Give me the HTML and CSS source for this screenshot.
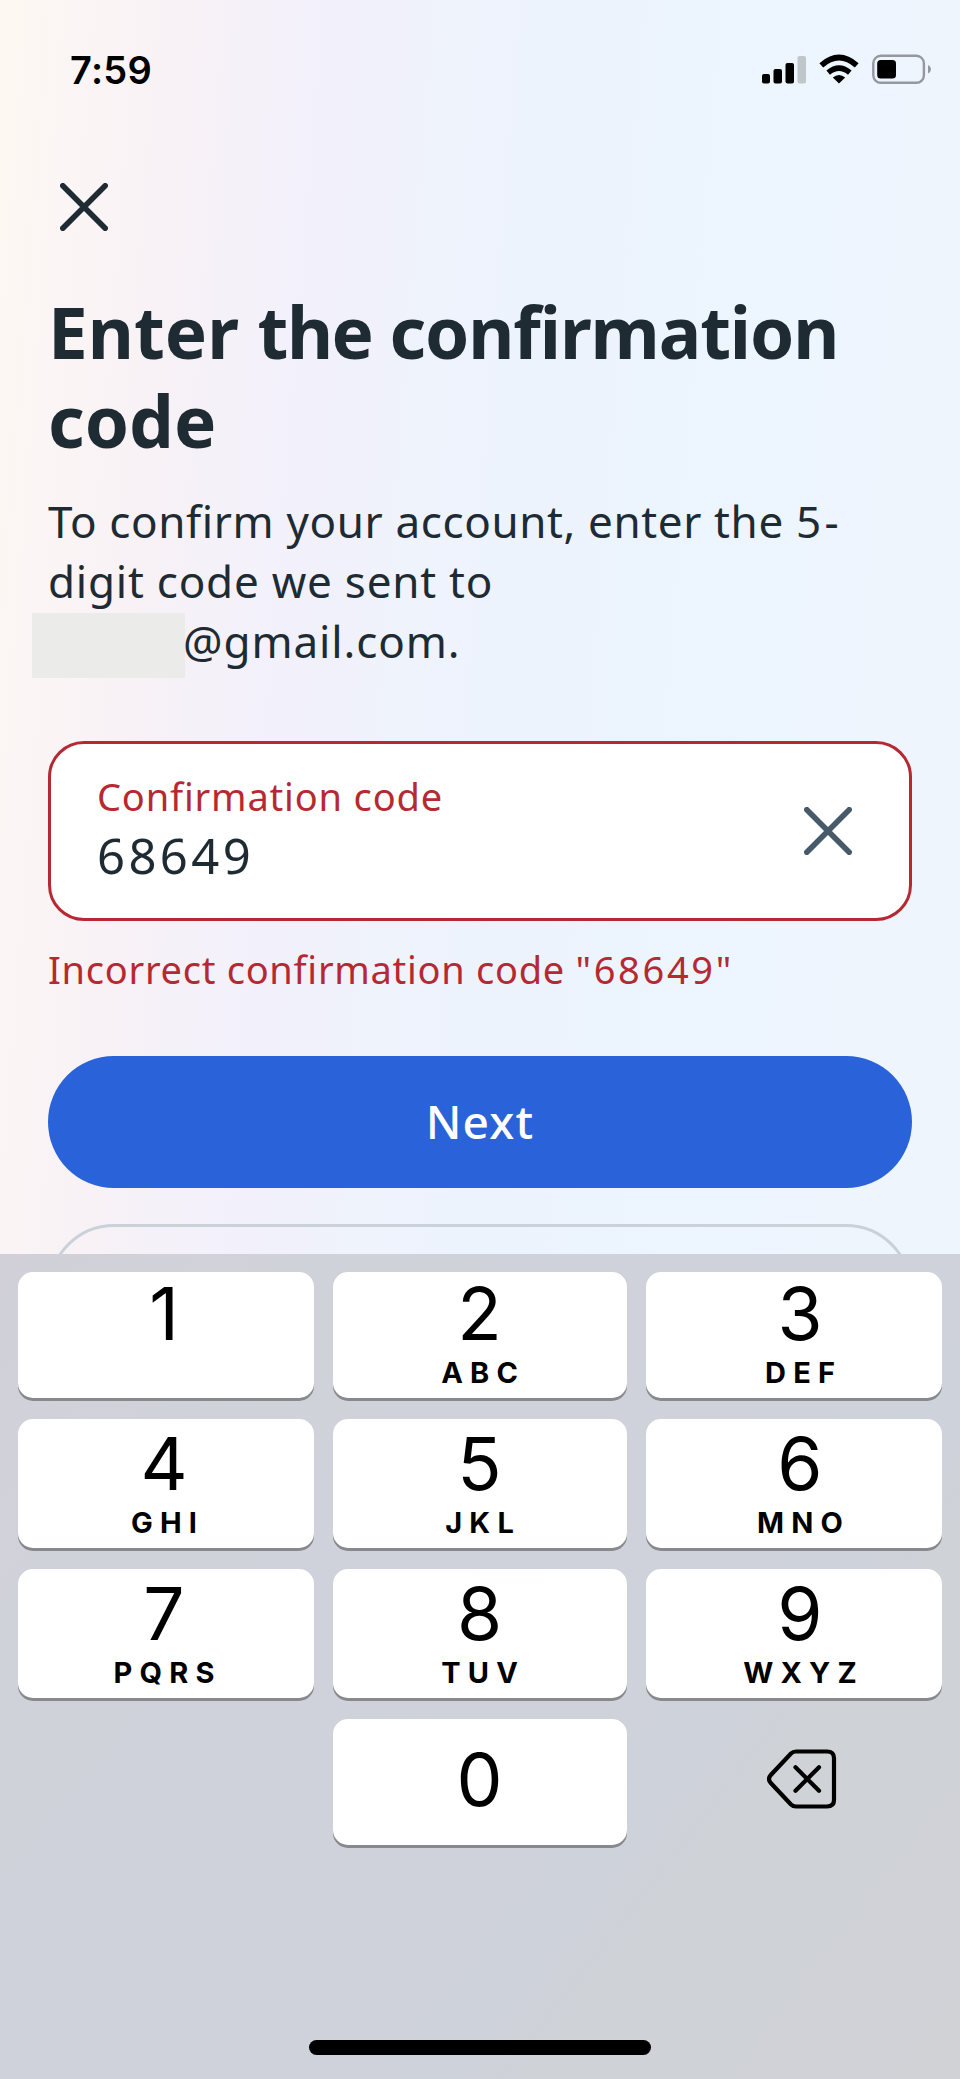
FILE: index.html
```html
<!DOCTYPE html>
<html lang="en">
<head>
<meta charset="utf-8">
<title>Enter the confirmation code</title>
<link rel="stylesheet" href="styles.css">
</head>
<body>
<div class="screen">
  <header class="status">
    <span class="time">7:59</span>
    <svg class="status-icons" width="170" height="30" viewBox="0 0 170 30">
      <rect x="0" y="20" width="8" height="9.5" rx="2"/>
      <rect x="11.5" y="15" width="8.500" height="14.500" rx="2"/>
      <rect x="23.500" y="9" width="8.500" height="20.500" rx="2"/>
      <rect x="35.500" y="2" width="8.500" height="27.500" rx="2" fill="#c1c6ca"/>
      <path d="M77 29.500 L70.800 23.400 Q77 18.400 83.200 23.400Z"/>
      <path d="M66.200 18.700 Q77 9.700 87.800 18.700" fill="none" stroke="#000" stroke-width="5.600"/>
      <path d="M59.300 11.400 Q77 -4.200 94.700 11.400" fill="none" stroke="#000" stroke-width="5.800"/>
      <rect x="111.300" y="1.800" width="50.600" height="27" rx="7.500" fill="none" stroke="#95989e" stroke-width="2.400"/>
      <rect x="115.200" y="6" width="18.800" height="18.600" rx="3.500"/>
      <path d="M166 11 Q169 12.500 169 15.200 Q169 18 166 19.500Z" fill="#95989e"/>
    </svg>
  </header>
  <main class="content">
    <svg class="close" width="48" height="48" viewBox="0 0 48 48"><path d="M2.800 2.800 45.200 45.200M45.200 2.800 2.800 45.200"/></svg>
    <h1 class="title"><span class="wide">Enter </span><span class="tight">the </span><span class="snug">confirmation</span><br>code</h1>
    <p class="intro"><span class="intro-first">To confirm your account, enter the <span class="five">5-</span></span><br>digit code we sent to</p>
    <div class="email"><span class="mask"></span><span class="domain">@gmail.com.</span></div>
    <div class="field">
      <div class="field-text">
        <div class="label">Confirmation code</div>
        <div class="value">68649</div>
      </div>
      <svg class="clear" width="48" height="48" viewBox="0 0 48 48"><path d="M2.800 2.800 45.200 45.200M45.200 2.800 2.800 45.200"/></svg>
    </div>
    <div class="error">Incorrect confirmation code <span class="quoted">"68649"</span></div>
    <div class="next"><span>Next</span></div>
    <div class="secondary"></div>
  </main>
  <section class="keyboard">
    <div class="keys">
      <div class="key left"><b>1</b></div>
      <div class="key"><b>2</b><i>ABC</i></div>
      <div class="key right"><b>3</b><i>DEF</i></div>
      <div class="key tall left"><b>4</b><i>GHI</i></div>
      <div class="key tall"><b>5</b><i>JKL</i></div>
      <div class="key tall right"><b>6</b><i>MNO</i></div>
      <div class="key tall left"><b>7</b><i>PQRS</i></div>
      <div class="key tall"><b>8</b><i>TUV</i></div>
      <div class="key tall right"><b>9</b><i>WXYZ</i></div>
      <div></div>
      <div class="key zero"><b>0</b></div>
      <div class="delete">
        <svg width="70" height="60" viewBox="0 0 70 60"><path d="M29 2.500H60Q67 2.500 67 9V51Q67 57.500 60 57.500H29Q26 57.500 24 55.500L3.800 34Q0.200 30 3.800 26L24 4.500Q26 2.500 29 2.500Z"/><path d="M28.500 18.200 52 41.800M52 18.200 28.500 41.800"/></svg>
      </div>
    </div>
    <div class="home"></div>
  </section>
</div>
</body>
</html>
```
FILE: styles.css
```css
* { box-sizing: border-box; }
body { margin: 0; }
.screen {
  width: 960px;
  height: 2079px;
  display: flex;
  flex-direction: column;
  overflow: hidden;
  color: #1e2b33;
  font-family: "Noto Sans", sans-serif;
  background: linear-gradient(94.500deg, #fef8f3 0, #fdf7f3 40px, #fbf5f5 75px, #f8f2f6 180px, #f5f1f8 245px, #f3f1fb 310px, #f1f1fb 390px, #eff3fc 440px, #edf3fd 560px, #ecf4fd 680px, #edf5fe 800px, #eef5fd 960px);
}
.status {
  display: flex;
  justify-content: space-between;
  height: 183px;
  padding: 54px 28px 0 70px;
  color: #000;
  font-family: Inter, sans-serif;
}
.time { font-size: 38px; line-height: 33px; font-weight: 600; height: 33px; letter-spacing: 0.300px; }
.content {
  height: 1071px;
  padding: 0 48px;
  display: flex;
  flex-direction: column;
  overflow: hidden;
}
.close { flex: none; margin-left: 12px; fill: none; stroke: #1e2b33; stroke-width: 5.600px; stroke-linecap: round; }
.title { margin: 56px 0 0; font-size: 71px; line-height: 89px; font-weight: 700; white-space: nowrap; }
.wide { letter-spacing: 0.050px; }
.tight { letter-spacing: -1.500px; }
.snug { letter-spacing: -1.080px; }
.intro { margin: 26px 0 0; font-size: 44px; line-height: 60px; white-space: nowrap; letter-spacing: 0.770px; }
.intro-first { letter-spacing: 0.620px; }
.five { letter-spacing: 3.400px; }
.email { display: flex; height: 60px; font-size: 44px; line-height: 60px; letter-spacing: 0.900px; }
.mask { width: 153px; height: 65px; margin: 2px 0 0 -16px; background: #ebebea; }
.domain { margin-left: -2px; }
.field {
  flex: none;
  display: flex;
  justify-content: space-between;
  align-items: center;
  height: 180px;
  margin-top: 70px;
  padding: 0 57px 0 46px;
  border: 3px solid #b62932;
  border-radius: 36px;
  background: #fff;
}
.field-text { display: flex; flex-direction: column; gap: 4px; padding-bottom: 6px; }
.label { font-size: 38px; line-height: 50px; color: #b62932; white-space: nowrap; letter-spacing: 0.830px; }
.value { font-size: 49px; line-height: 60px; letter-spacing: 3.400px; }
.clear { fill: none; stroke: #465a69; stroke-width: 5.600px; stroke-linecap: round; }
.error { margin-top: 23px; font-size: 38px; line-height: 50px; color: #b62932; white-space: nowrap; letter-spacing: 0.720px; }
.quoted { letter-spacing: 2.650px; }
.next {
  flex: none;
  display: flex;
  justify-content: center;
  margin-top: 62px;
  height: 132px;
  border-radius: 66px;
  background: #2962d9;
  color: #fff;
  font-size: 46px;
  font-weight: 500;
  line-height: 130px;
  letter-spacing: 1.200px;
}
.secondary { flex: none; height: 132px; margin-top: 36px; border: 3px solid #cbd1d9; border-radius: 66px; }
.keyboard {
  flex: none;
  height: 825px;
  padding-top: 18px;
  color: #000;
  font-family: Inter, sans-serif;
  background: linear-gradient(128deg, #d1d0d9 0%, #d0d2da 20%, #ced2db 68%, #cfd2d6 74%, #d0d2d6 100%);
}
.keys {
  display: grid;
  grid-template-columns: 296px 294px 296px;
  grid-template-rows: 126px 129px 129px 126px;
  gap: 21px 19px;
  padding: 0 18px;
}
.key {
  display: flex;
  flex-direction: column;
  align-items: center;
  gap: 5px;
  padding: 5px 1px 0 0;
  border-radius: 15px;
  background: #fff;
  box-shadow: 0 3px 0 #88898d;
}
.tall { padding-top: 8px; }
.zero { padding-top: 24px; }
.left { padding-right: 4px; }
.right { padding-right: 0; padding-left: 12px; }
.key b { font-size: 73px; line-height: 74px; font-weight: 400; }
.key i { font-size: 29px; line-height: 34px; font-weight: 700; font-style: normal; letter-spacing: 7.200px; margin-right: -7.200px; }
.delete { display: flex; padding: 30px 0 0 121px; }
.delete svg { fill: none; stroke: #000; stroke-width: 4.200px; stroke-linecap: round; stroke-linejoin: round; }
.home { width: 342px; height: 15px; margin: 195px auto 0; border-radius: 8px; background: #000; }
```
